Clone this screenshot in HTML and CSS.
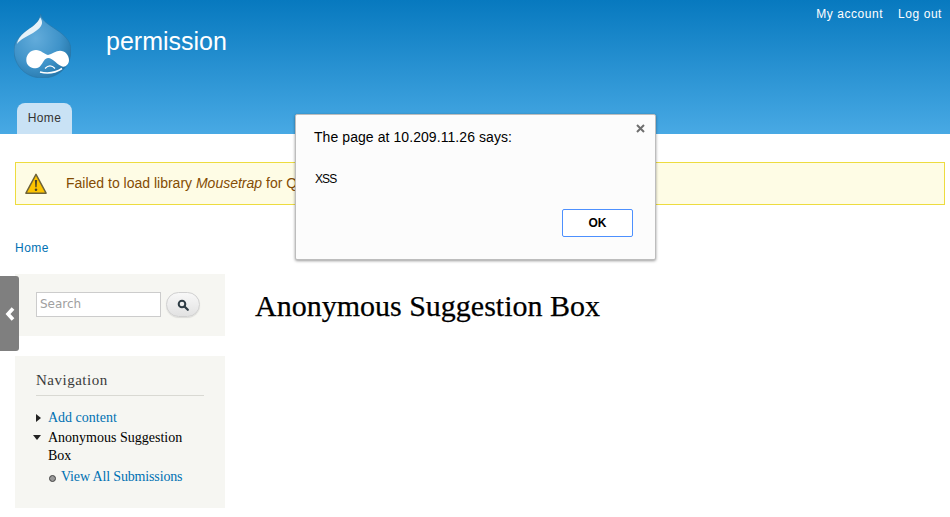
FILE: index.html
```html
<!DOCTYPE html>
<html lang="en">
<head>
<meta charset="utf-8">
<title>Anonymous Suggestion Box | permission</title>
<link rel="stylesheet" href="styles.css">
</head>
<body>
<header class="site-header">
  <nav class="secondary-menu">
    <a href="#">My account</a>
    <a href="#">Log out</a>
  </nav>
  <div class="branding">
    <svg class="logo" viewBox="0 0 57 64" width="57" height="64" aria-label="Home">
      <defs>
        <radialGradient id="drop" cx="0.38" cy="0.38" r="0.72">
          <stop offset="0" stop-color="#63acdb"/>
          <stop offset="0.6" stop-color="#3f93c9"/>
          <stop offset="0.9" stop-color="#2a7cb0"/>
          <stop offset="1" stop-color="#1d6a9b"/>
        </radialGradient>
      </defs>
      <path d="M26.700 0C27.500 6 33 9.500 39 13.500C49 20 57 26 57 36C57 52 45 64 28.500 64C12 64 0 52 0 36C0 26 8 19.500 16 14.500C21 11 25.500 6.500 26.700 0Z" fill="url(#drop)" stroke="#2a76a6" stroke-width="0.6"/>
      <path d="M26 3.500C24.500 9 17 13.500 11 18C6 22 3.500 26 3 30C6.500 25 13 22.500 19 19C24 16 28.500 12 28 8C27.800 6 27 4.500 26 3.500Z" fill="#e6f2f9"/>
      <path d="M12.300 46C12.300 40 17 36 22 36C27 36 30 40 34 41C38 40 42 36.700 46 36.700C51 36.700 55 41 55 46C55 50 52 53 49 52.700C44 52 39 44 34 44C29 44 28 54.300 22 54.300C16 54.300 12.300 51 12.300 46Z" fill="#fff"/>
      <path d="M31 54.500Q36 49.500 41 54.500" fill="none" stroke="#fff" stroke-width="1.200"/>
      <path d="M26 58Q38 61 48 54.500" fill="none" stroke="#fff" stroke-width="1.500"/>
    </svg>
    <div class="site-name">permission</div>
  </div>
  <ul class="tabs">
    <li class="tab"><a href="#">Home</a></li>
  </ul>
</header>

<main class="page">
  <div class="warning">
    <svg class="warning-icon" viewBox="0 0 24 24" width="22" height="22" aria-hidden="true">
      <path d="M12 1.500L23 22H1Z" fill="#fcc300" stroke="#6d6339" stroke-width="1.600" stroke-linejoin="round"/>
      <path d="M10.800 7.500h2.400l-.5 8h-1.400Z" fill="#4d4427"/>
      <circle cx="12" cy="18.300" r="1.400" fill="#4d4427"/>
    </svg>
    <span class="warning-text">Failed to load library <em>Mousetrap</em> for Quickbar.</span>
  </div>
  <div class="breadcrumb"><a href="#">Home</a></div>
  <div class="columns">
    <aside class="sidebar">
      <section class="block search-block">
        <input class="search-input" type="text" placeholder="Search">
        <button class="search-button" type="button" aria-label="Search">
          <svg viewBox="0 0 12 12" width="12" height="12" aria-hidden="true">
            <circle cx="5" cy="5" r="3.300" fill="none" stroke="#2e3c44" stroke-width="2"/>
            <path d="M7.500 7.500L10.800 10.800" stroke="#2e3c44" stroke-width="2.200" stroke-linecap="round"/>
          </svg>
        </button>
      </section>
      <section class="block nav-block">
        <h2 class="block-title">Navigation</h2>
        <ul class="menu">
          <li class="collapsed"><a href="#">Add content</a></li>
          <li class="expanded">Anonymous Suggestion Box
            <ul class="submenu">
              <li><a href="#">View All Submissions</a></li>
            </ul>
          </li>
        </ul>
      </section>
    </aside>
    <div class="content">
      <h1 class="page-title">Anonymous Suggestion Box</h1>
    </div>
  </div>
</main>

<div class="sidebar-toggle">
  <svg viewBox="0 0 10 14" width="10" height="14" aria-hidden="true">
    <path d="M8 1.500L3 7L8 12.500" fill="none" stroke="#fff" stroke-width="3.600"/>
  </svg>
</div>

<div class="dialog" role="dialog">
  <button class="dialog-close" type="button" aria-label="Close">
    <svg viewBox="0 0 9 9" width="9" height="9" aria-hidden="true">
      <path d="M1 1L8 8M8 1L1 8" stroke="#6f6f6f" stroke-width="2"/>
    </svg>
  </button>
  <p class="dialog-title">The page at 10.209.11.26 says:</p>
  <p class="dialog-message">XSS</p>
  <div class="dialog-actions">
    <button class="dialog-ok" type="button">OK</button>
  </div>
</div>
</body>
</html>
```

FILE: styles.css
```css
* { box-sizing: border-box; }
html, body { margin: 0; padding: 0; height: 517px; overflow: hidden; }
body { background: #fff; font-family: "Liberation Sans", Arial, sans-serif; font-size: 14px; color: #3b3b3b; position: relative; }
a { color: #0071b3; text-decoration: none; }
ul { list-style: none; margin: 0; padding: 0; }

.site-header { height: 134px; background: linear-gradient(to bottom, #0779bf 0%, #48a9e4 100%); display: flex; flex-direction: column; position: relative; }
.secondary-menu { display: flex; justify-content: flex-end; gap: 15px; padding: 6px 8px 0 0; height: 24px; font-size: 12px; letter-spacing: 0.55px; line-height: 16px; }
.secondary-menu a { color: #fff; }
.branding { display: flex; align-items: flex-start; margin-top: -10px; padding-left: 14px; height: 89px; }
.logo { flex: none; }
.site-name { margin-left: 35px; margin-top: 12px; color: #fff; font-size: 25px; line-height: 30px; }
.tabs { display: flex; padding-left: 17px; margin-top: auto; }
.tab { width: 55px; height: 31px; background: #c9e2f5; border-radius: 8px 8px 0 0; text-align: center; }
.tab a { display: block; color: #333; font-size: 12px; line-height: 31px; letter-spacing: 0.4px; }

.page { padding: 28px 5px 0 15px; }
.warning { display: flex; align-items: center; height: 43px; border: 1px solid #eddc3f; background: #fefce5; color: #844c03; font-size: 14px; padding-left: 9px; }
.warning-icon { flex: none; margin-right: 19px; }
.warning-text { padding-bottom: 2px; }
.warning em { font-style: italic; }
.breadcrumb { margin-top: 34px; height: 35px; font-size: 12px; line-height: 18px; letter-spacing: 0.5px; }

.columns { display: flex; }
.sidebar { width: 210px; flex: none; display: flex; flex-direction: column; gap: 20px; }
.block { background: #f6f6f2; }
.search-block { height: 62px; padding: 18px 0 0 21px; display: flex; align-items: flex-start; gap: 5px; }
.search-input { width: 125px; height: 25px; border: 1px solid #ccc; background: #fff; padding: 0 4px 2px 3px; font-family: "DejaVu Sans", sans-serif; font-size: 12px; color: #888; }
.search-input::placeholder { color: #a0a0a0; }
.search-button { width: 34px; height: 25px; padding: 0; border: 1px solid #d0d0d0; border-radius: 13px; background: linear-gradient(to bottom, #f8f8f8, #e2e2e2); box-shadow: 0 1px 1px rgba(0,0,0,.1); display: flex; align-items: center; justify-content: center; }
.nav-block { height: 152px; padding: 15px 21px 0; font-family: "Liberation Serif", serif; font-size: 14px; color: #000; }
.block-title { margin: 0 0 13px; padding-bottom: 5px; border-bottom: 1px solid #d9d9d3; font-family: "Liberation Serif", serif; font-size: 15px; font-weight: normal; line-height: 18px; height: 25px; color: #3b3b3b; letter-spacing: 0.5px; }
.menu > li { position: relative; padding-left: 12px; line-height: 18px; margin-bottom: 2px; padding-right: 18px; }
.menu > li::before { content: ""; position: absolute; border-style: solid; border-color: transparent; }
.collapsed::before { left: 0; top: 5px; border-width: 4px 0 4px 5px !important; border-left-color: #222 !important; }
.expanded::before { left: -3px; top: 6px; border-width: 5px 4px 0 4px !important; border-top-color: #222 !important; }
.submenu { margin-top: 3px; margin-right: -18px; }
.submenu li { position: relative; padding-left: 13px; letter-spacing: -0.15px; }
.submenu li::before { content: ""; position: absolute; left: 1px; top: 7px; width: 5px; height: 5px; border: 1px solid #444; border-radius: 50%; background: #999; }

.content { flex: 1; padding-left: 30px; }
.page-title { margin: 14px 0 0; font-family: "Liberation Serif", serif; font-size: 30px; font-weight: normal; line-height: 36px; color: #000; -webkit-text-stroke: 0.25px #000; }

.sidebar-toggle { position: absolute; left: 0; top: 276px; width: 19px; height: 75px; background: #7f7f7f; border-radius: 0 3px 3px 0; display: flex; align-items: center; justify-content: center; }

.dialog { position: absolute; left: 295px; top: 114px; width: 361px; height: 146px; background: #fcfcfc; border: 1px solid #bdbdbd; border-radius: 2px; box-shadow: 0 1px 3px rgba(0,0,0,.4); padding: 14px 22px 0 18px; font-family: "Liberation Sans", sans-serif; color: #000; }
.dialog-close { position: absolute; right: 10px; top: 9px; width: 9px; height: 9px; padding: 0; border: 0; background: none; display: flex; }
.dialog-title { margin: 0; font-size: 14px; line-height: 17px; letter-spacing: 0.07px; }
.dialog-message { margin: 25px 0 0 1px; font-size: 12px; line-height: 16px; letter-spacing: -0.9px; }
.dialog-actions { display: flex; justify-content: flex-end; margin-top: 22px; }
.dialog-ok { width: 71px; height: 28px; border: 1px solid #4d90fe; border-radius: 2px; background: #fff; font-family: "Liberation Sans", sans-serif; font-size: 12px; font-weight: bold; color: #000; padding: 0; }
```
